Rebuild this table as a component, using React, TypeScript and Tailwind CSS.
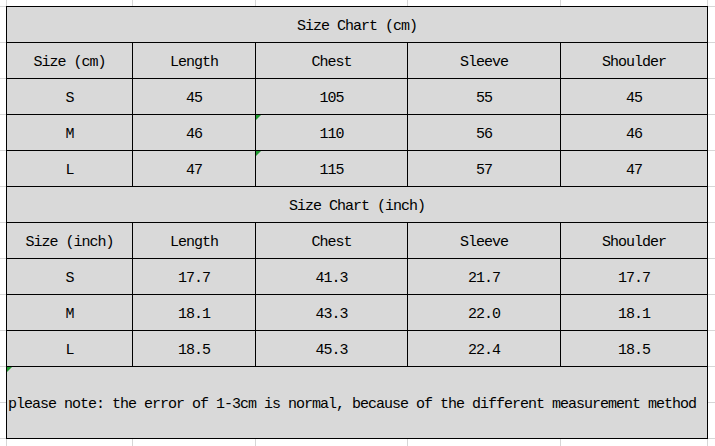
import React from "react";

const Tri = () => (
  <span className="absolute left-0 top-0 w-0 h-0 border-t-[5px] border-t-[#1e9a2e] border-r-[5px] border-r-transparent" />
);

type CellProps = { children?: React.ReactNode; tri?: boolean; span?: boolean };

const Cell = ({ children, tri, span }: CellProps) => (
  <div
    className={
      (span ? "col-span-5 " : "") +
      "relative bg-[#d9d9d9] flex items-center justify-center pt-[4px] whitespace-nowrap"
    }
  >
    {tri && <Tri />}
    {children}
  </div>
);

const cmRows = [
  ["S", "45", "105", "55", "45"],
  ["M", "46", "110", "56", "46"],
  ["L", "47", "115", "57", "47"],
];
const inRows = [
  ["S", "17.7", "41.3", "21.7", "17.7"],
  ["M", "18.1", "43.3", "22.0", "18.1"],
  ["L", "18.5", "45.3", "22.4", "18.5"],
];

export default function App() {
  return (
    <div className="w-[715px] h-[446px] overflow-hidden bg-white pl-[6px] pt-[6px] bg-[repeating-linear-gradient(to_bottom,transparent_0_6px,#d6d6d6_6px_7px,transparent_7px_36px),linear-gradient(to_right,transparent_0_6px,#d6d6d6_6px_7px,transparent_7px_132px,#d6d6d6_132px_133px,transparent_133px_255px,#d6d6d6_255px_256px,transparent_256px_407px,#d6d6d6_407px_408px,transparent_408px_560px,#d6d6d6_560px_561px,transparent_561px_707px,#d6d6d6_707px_708px,transparent_708px)]">
      <div className="w-[702px] grid grid-cols-[125px_122px_151px_152px_146px] auto-rows-[35px] gap-px p-px bg-black text-black [font-family:'Liberation_Mono','Courier_New',monospace] text-[15px] tracking-[-1px] leading-none">
        <Cell span>Size Chart (cm)</Cell>
        <Cell>Size (cm)</Cell>
        <Cell>Length</Cell>
        <Cell>Chest</Cell>
        <Cell>Sleeve</Cell>
        <Cell>Shoulder</Cell>
        {cmRows.map((r, i) =>
          r.map((v, j) => (
            <Cell key={"c" + i + j} tri={j === 2 && i > 0}>
              {v}
            </Cell>
          ))
        )}
        <Cell span>Size Chart (inch)</Cell>
        <Cell>Size (inch)</Cell>
        <Cell>Length</Cell>
        <Cell>Chest</Cell>
        <Cell>Sleeve</Cell>
        <Cell>Shoulder</Cell>
        {inRows.map((r, i) =>
          r.map((v, j) => <Cell key={"i" + i + j}>{v}</Cell>)
        )}
        <div className="col-span-5 row-span-2 relative bg-[#d9d9d9] flex items-center justify-start pl-[1px] pt-[4px] whitespace-nowrap h-[71px]">
          <Tri />
          please note: the error of 1-3cm is normal, because of the different measurement method
        </div>
      </div>
    </div>
  );
}
